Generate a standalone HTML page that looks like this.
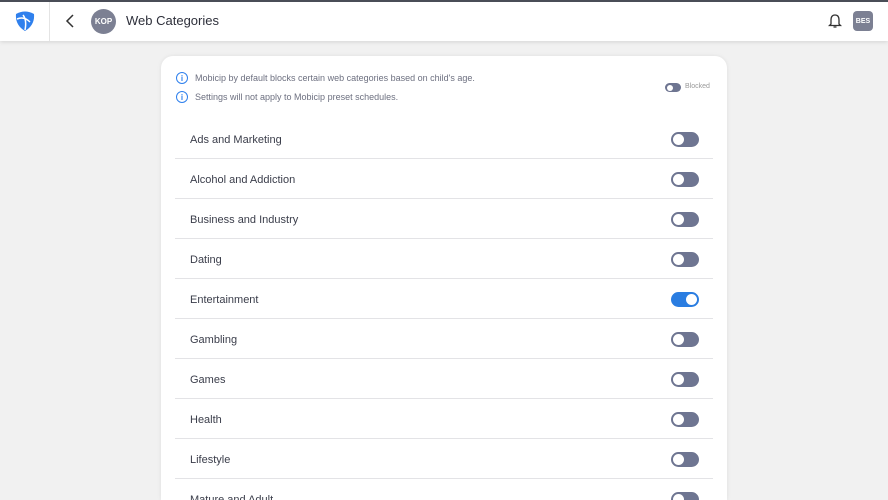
<!DOCTYPE html>
<html><head><style>
*{margin:0;padding:0;box-sizing:border-box}
html,body{width:888px;height:500px;overflow:hidden}
body{background:#f1f1f1;font-family:"Liberation Sans",sans-serif;position:relative}
.top{position:absolute;left:0;top:0;width:888px;height:41px;background:#fff;border-top:2px solid #4a4d57;box-shadow:0 1px 4px rgba(0,0,0,.12)}
.sep{position:absolute;left:49px;top:0;width:1px;height:39px;background:#e4e4e4}
.av{position:absolute;border-radius:50%;background:#7c8093;color:#fff;font-size:8px;font-weight:bold;display:flex;align-items:center;justify-content:center}
.card{position:absolute;left:161px;top:56px;width:566px;height:444px;background:#fff;border-radius:12px 12px 0 0;box-shadow:0 0 4px rgba(0,0,0,.08)}
.info{position:absolute;left:15px;font-size:9px;color:#6d7080;display:flex;align-items:center}
.ic{width:12px;height:12px;border:1.2px solid #2f80ed;border-radius:50%;color:#2f80ed;font-size:8px;display:flex;align-items:center;justify-content:center;margin-right:7px;font-weight:bold}
.row{position:absolute;left:14px;width:538px;height:40px;border-bottom:1px solid #e3e3e6}
.row span{position:absolute;left:15px;top:15px;font-size:11px;color:#3a3d4a}
.tg{position:absolute;left:496px;top:13px;width:28px;height:15px;border-radius:8px;background:#6e7591}
.tg::after{content:"";position:absolute;left:2px;top:2px;width:11px;height:11px;border-radius:50%;background:#fff}
.tg.on{background:#2a7de1}.tg.on::after{left:15px}
</style></head><body>
<div class="top">
<svg style="position:absolute;left:14px;top:8px" width="22" height="22" viewBox="0 0 22 22"><path d="M2 4 Q11 -1 20 4 Q21 15 11 21 Q1 15 2 4Z" fill="#2f80ed"/><path d="M3 9 Q10 6 16 12 M9 5 Q13 10 11 20" stroke="#fff" stroke-width="1.5" fill="none"/></svg>
<div class="sep"></div>
<svg style="position:absolute;left:64px;top:11px" width="12" height="16"><path d="M9 2 L3 8 L9 14" stroke="#333" stroke-width="1.5" fill="none"/></svg>
<div class="av" style="left:91px;top:7px;width:25px;height:25px">KOP</div>
<div style="position:absolute;left:126px;top:11px;font-size:13px;color:#2d2f3a">Web Categories</div>
<svg style="position:absolute;left:828px;top:11px" width="14" height="16" viewBox="0 0 14 16"><path d="M3 11 V7 Q3 2 7 2 Q11 2 11 7 V11 L12.5 12.5 H1.5Z M5.5 14 H8.5" stroke="#333" stroke-width="1.3" fill="none"/></svg>
<div class="av" style="left:853px;top:9px;width:20px;height:20px;border-radius:4px;font-size:7px">BES</div>
</div>
<div class="card">
<div class="info" style="top:16px"><div class="ic">i</div>Mobicip by default blocks certain web categories based on child's age.</div>
<div class="info" style="top:35px"><div class="ic">i</div>Settings will not apply to Mobicip preset schedules.</div>
<div style="position:absolute;left:504px;top:27px;width:16px;height:9px;border-radius:5px;background:#6e7591"><div style="position:absolute;left:1.5px;top:1.5px;width:6px;height:6px;border-radius:50%;background:#fff"></div></div>
<div style="position:absolute;left:524px;top:27px;font-size:7px;color:#999">Blocked</div>
<div class="row" style="top:63px"><span>Ads and Marketing</span><div class="tg"></div></div>
<div class="row" style="top:103px"><span>Alcohol and Addiction</span><div class="tg"></div></div>
<div class="row" style="top:143px"><span>Business and Industry</span><div class="tg"></div></div>
<div class="row" style="top:183px"><span>Dating</span><div class="tg"></div></div>
<div class="row" style="top:223px"><span>Entertainment</span><div class="tg on"></div></div>
<div class="row" style="top:263px"><span>Gambling</span><div class="tg"></div></div>
<div class="row" style="top:303px"><span>Games</span><div class="tg"></div></div>
<div class="row" style="top:343px"><span>Health</span><div class="tg"></div></div>
<div class="row" style="top:383px"><span>Lifestyle</span><div class="tg"></div></div>
<div class="row" style="top:423px"><span>Mature and Adult</span><div class="tg"></div></div>
</div>
</body></html>
